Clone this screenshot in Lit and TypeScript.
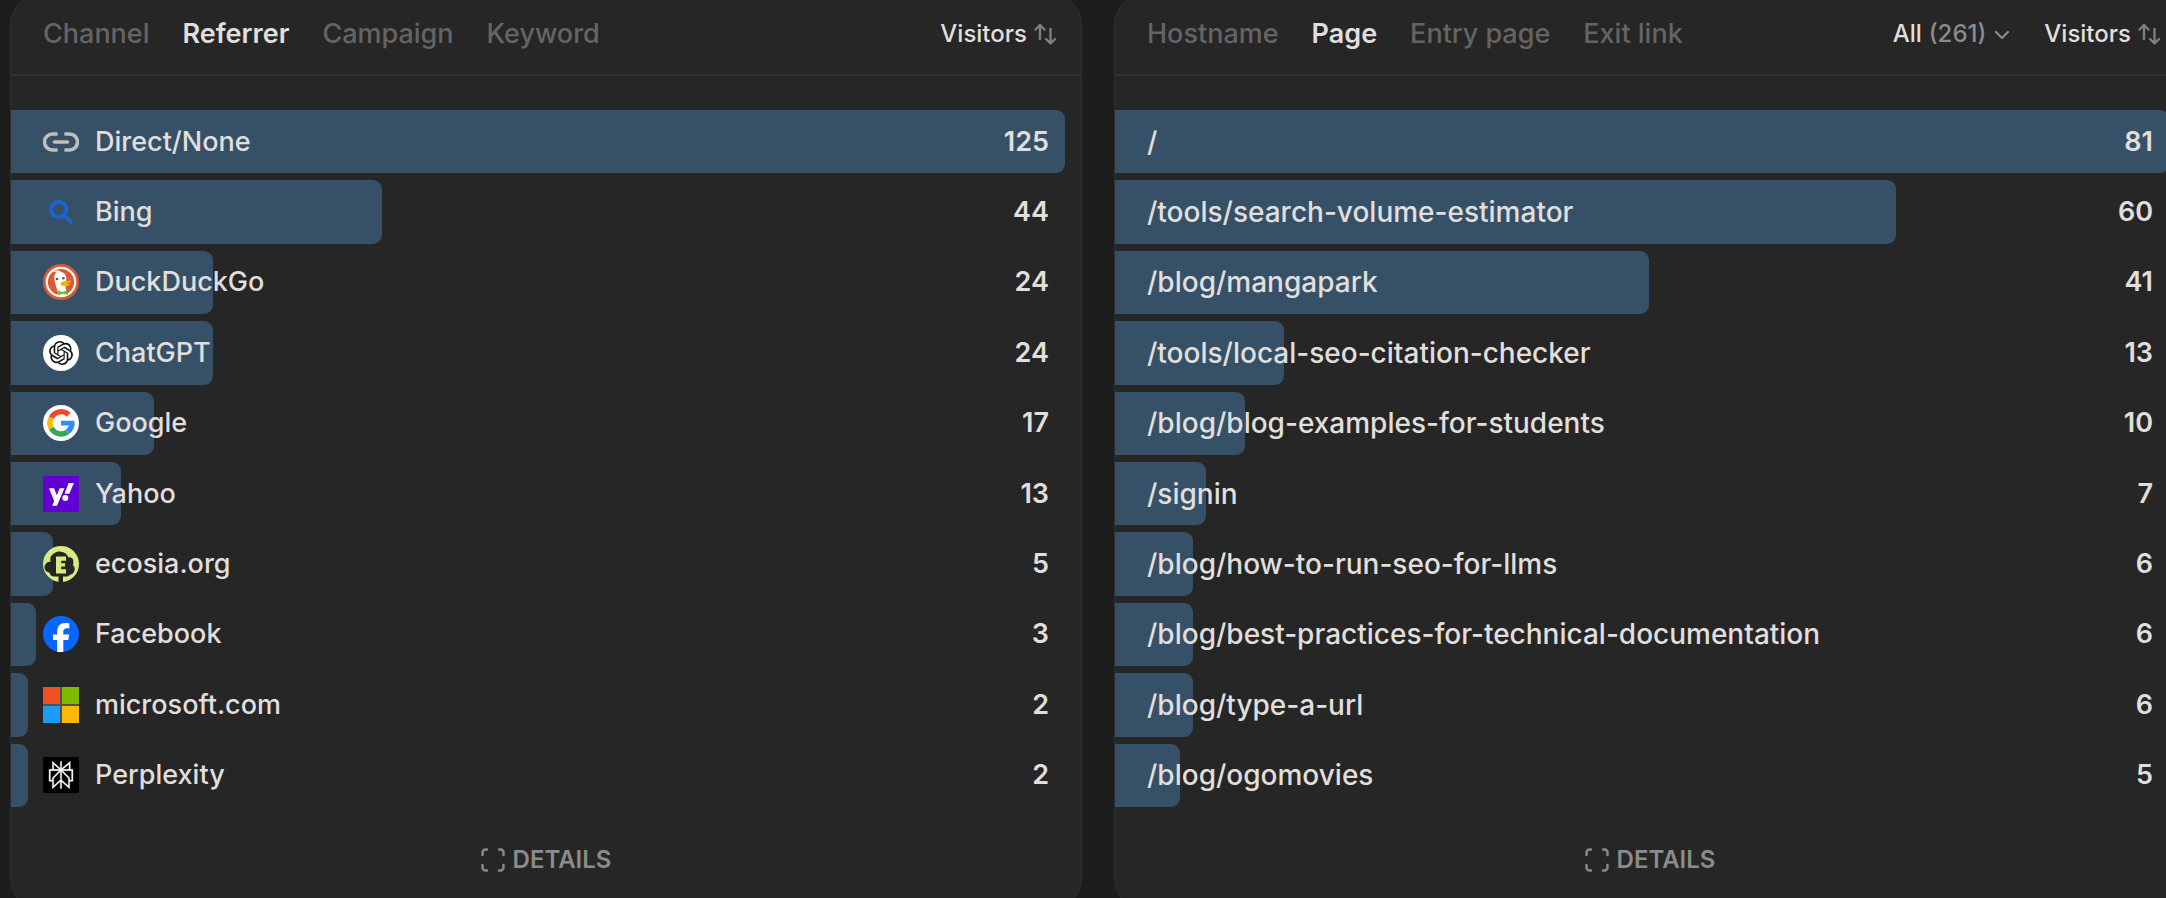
import { LitElement, html, css, svg, nothing, type TemplateResult } from "lit";
import { customElement, property, state } from "lit/decorators.js";
import { classMap } from "lit/directives/class-map.js";

interface Entry {
  label: string;
  value: number;
  icon?: string;
}

const icons: Record<string, TemplateResult> = {
  direct: svg`<g fill="none" stroke="#bfbfbd" stroke-width="3.6" stroke-linecap="butt">
    <path d="M14.6 10H9.5a8 8 0 0 0 0 16h5.1M21.4 10h5.1a8 8 0 0 1 0 16h-5.1"/>
    <path d="M11.5 18h13" stroke-linecap="round"/></g>`,
  bing: svg`<g fill="none" stroke="#1a66cc" stroke-width="3.8" stroke-linecap="round">
    <circle cx="15.7" cy="15.5" r="7.7"/><path d="M21.2 21.3l6.6 7"/></g>`,
  duckduckgo: svg`<circle cx="18" cy="18" r="18" fill="#de5833"/>
    <circle cx="18" cy="18" r="14.2" fill="none" stroke="#fff" stroke-width="2.2"/>
    <path d="M15.6 31c-1-5-3.1-9.3-3.8-13.3-.9-5-.5-7.8 2-9-1.2-.5-2-.8-2.9-.8 1-1.1 2.8-1.6 4.6-1.3 1 .1 2 .6 2.8 1.3 3.4.7 5 3.2 5 6.8 0 2-.7 4.3-.7 7.3 0 3.2.6 5.6 1.5 8.2-2.6 1.5-5.6 1.7-8.5.8z" fill="#fff"/>
    <circle cx="14" cy="15" r="1.3" fill="#44546b"/><circle cx="20.4" cy="14.2" r="1.2" fill="#44546b"/>
    <path d="M18 18.5c2.2-1.6 6.5-1.6 9.5-2 .9.3.7 1.2-.2 1.6-1.5.7-2.8 1-4.3 1.2 1.5.3 3 .4 4 .4.4 1-1.4 2.6-4.5 2.6-2.3 0-5-.7-5-2 0-.8.2-1.4.5-1.800z" fill="#fdb50a"/>
    <path d="M15 26.6l4.300 1.400 5.200-1.700.4 4.400-5-.9-4.300 1.500z" fill="#65bc46"/>`,
  chatgpt: svg`<circle cx="18" cy="18" r="18" fill="#fff"/>
    <path transform="translate(6 6)" fill="#111" d="M22.2819 9.8211a5.9847 5.9847 0 0 0-.5157-4.9108 6.0462 6.0462 0 0 0-6.5098-2.9A6.0651 6.0651 0 0 0 4.9807 4.1818a5.9847 5.9847 0 0 0-3.9977 2.9 6.0462 6.0462 0 0 0 .7427 7.0966 5.98 5.98 0 0 0 .511 4.9107 6.051 6.051 0 0 0 6.5146 2.9001A5.9847 5.9847 0 0 0 13.2599 24a6.0557 6.0557 0 0 0 5.7718-4.2058 5.9894 5.9894 0 0 0 3.9977-2.9001 6.0557 6.0557 0 0 0-.7475-7.073zm-9.022 12.6081a4.4755 4.4755 0 0 1-2.8764-1.0408l.1419-.0804 4.7783-2.7582a.7948.7948 0 0 0 .3927-.6813v-6.7369l2.02 1.1686a.071.071 0 0 1 .038.052v5.5826a4.504 4.504 0 0 1-4.4945 4.4944zm-9.6607-4.1254a4.4708 4.4708 0 0 1-.5346-3.0137l.142.0852 4.783 2.7582a.7712.7712 0 0 0 .7806 0l5.8428-3.3685v2.3324a.0804.0804 0 0 1-.0332.0615L9.74 19.9502a4.4992 4.4992 0 0 1-6.1408-1.6464zM2.3408 7.8956a4.485 4.485 0 0 1 2.3655-1.9728V11.6a.7664.7664 0 0 0 .3879.6765l5.8144 3.3543-2.0201 1.1685a.0757.0757 0 0 1-.071 0l-4.8303-2.7865A4.504 4.504 0 0 1 2.3408 7.872zm16.5963 3.8558L13.1038 8.364 15.1192 7.2a.0757.0757 0 0 1 .071 0l4.8303 2.7913a4.4944 4.4944 0 0 1-.6765 8.1042v-5.6772a.79.79 0 0 0-.407-.667zm2.0107-3.0231l-.142-.0852-4.7735-2.7818a.7759.7759 0 0 0-.7854 0L9.409 9.2297V6.8974a.0662.0662 0 0 1 .0284-.0615l4.8303-2.7866a4.4992 4.4992 0 0 1 6.6802 4.66zM8.3065 12.863l-2.02-1.1638a.0804.0804 0 0 1-.038-.0567V6.0742a4.4992 4.4992 0 0 1 7.3757-3.4537l-.142.0805L8.704 5.459a.7948.7948 0 0 0-.3927.6813zm1.0976-2.3654l2.602-1.4998 2.6069 1.4998v2.9994l-2.5974 1.4997-2.6067-1.4997Z"/>`,
  google: svg`<circle cx="18" cy="18" r="18" fill="#fff"/>
    <g fill="none" stroke-width="5.4">
    <path d="M25.7 9.700A11 11 0 0 0 8.300 12.700" stroke="#f0492b"/>
    <path d="M8.300 12.700a11 11 0 0 0 0 10.600" stroke="#fbbc05"/>
    <path d="M8.300 23.300a11 11 0 0 0 16.200 3.500" stroke="#34a853"/>
    <path d="M24.500 26.800A11 11 0 0 0 29 18.400" stroke="#2f8df6"/></g>
    <path d="M18 15.800h13.300c.2 1.600.1 3.300-.2 4.700H18z" fill="#2f8df6"/>`,
  yahoo: svg`<path d="M0 0h36v36H0z" fill="#6001d2"/>
    <path d="M6 12.300h5l2.800 7 2.800-7h4.800L14 29.700H9.200l2-4.700z" fill="#fff"/>
    <circle cx="22.300" cy="22" r="3" fill="#fff"/>
    <path d="M25.600 7h5.300l-4.600 10.800h-4.700z" fill="#fff"/>`,
  ecosia: svg`<circle cx="18" cy="18" r="18" fill="#d7eb80"/>
    <path d="M15.500 36v-5.500H11a5 5 0 0 1-4.500-3.700A5.500 5.500 0 0 1 7.500 15.800a8 8 0 0 1 4-8.800 9.500 9.500 0 0 1 14 4.500 3.800 3.800 0 0 1 4.800 4.300 3.600 3.600 0 0 1-.5 3.200 5.600 5.600 0 0 1-2.800 9.700 5 5 0 0 1-3 1.800H20V36z" fill="#262626"/>
    <path d="M13 10.500h10v4.300h-4.800v2.400H22v3.400h-3.800v2.600H23v4.300H13z" fill="#d7eb80"/>`,
  facebook: svg`<circle cx="18" cy="18" r="18" fill="#0866ff"/>
    <path d="M14.200 36V24H10v-5.600h4.200v-2.700c0-6 2.700-8.800 8.400-8.800 1.300 0 2.900.2 3.700.4v5c-.5-.1-1.300-.1-2-.1-3 0-4 1.100-4 3.900v2.300h5.900L25.200 24h-4.900v11.900a18 18 0 0 1-6.100.1z" fill="#fff"/>`,
  microsoft: svg`<path d="M0 0h17v17H0z" fill="#f25022"/><path d="M19 0h17v17H19z" fill="#7fba00"/>
    <path d="M0 19h17v17H0z" fill="#1b9df5"/><path d="M19 19h17v17H19z" fill="#ffb90a"/>
    <path d="M17 0h2v36h-2zM0 17h36v2H0z" fill="#505050"/>`,
  perplexity: svg`<rect width="36" height="36" rx="1.5" fill="#000"/>
    <path transform="translate(4.2 4.2) scale(1.15)" fill="#fff" stroke="#fff" stroke-width=".3" d="M22.3977 7.0896h-2.3106V.0676l-7.5094 6.3542V.1577h-1.1554v6.1966L4.4904 0v7.0896H1.6023v10.3976h2.8882V24l6.932-6.3591v6.2005h1.1554v-6.0469l6.9318 6.1807v-6.4879h2.8882V7.0896zm-3.4657-4.531v4.531h-5.355l5.355-4.531zm-13.2862.0676 4.8691 4.4634H5.6458V2.6262zM2.7576 16.332V8.245h7.8476l-6.1149 6.1147v1.9723H2.7576zm2.8882 5.0404v-3.8852h.0001v-2.6488l5.7763-5.7764v7.0111l-5.7764 5.2993zm12.7086.0248-5.7766-5.1509V9.0618l5.7766 5.7766v6.5588zm2.8882-5.0652h-1.733v-1.9723L13.3948 8.245h7.8478v8.087z"/>`,
};

const referrers: Entry[] = [
  { label: "Direct/None", value: 125, icon: "direct" },
  { label: "Bing", value: 44, icon: "bing" },
  { label: "DuckDuckGo", value: 24, icon: "duckduckgo" },
  { label: "ChatGPT", value: 24, icon: "chatgpt" },
  { label: "Google", value: 17, icon: "google" },
  { label: "Yahoo", value: 13, icon: "yahoo" },
  { label: "ecosia.org", value: 5, icon: "ecosia" },
  { label: "Facebook", value: 3, icon: "facebook" },
  { label: "microsoft.com", value: 2, icon: "microsoft" },
  { label: "Perplexity", value: 2, icon: "perplexity" },
];

const pages: Entry[] = [
  { label: "/", value: 81 },
  { label: "/tools/search-volume-estimator", value: 60 },
  { label: "/blog/mangapark", value: 41 },
  { label: "/tools/local-seo-citation-checker", value: 13 },
  { label: "/blog/blog-examples-for-students", value: 10 },
  { label: "/signin", value: 7 },
  { label: "/blog/how-to-run-seo-for-llms", value: 6 },
  { label: "/blog/best-practices-for-technical-documentation", value: 6 },
  { label: "/blog/type-a-url", value: 6 },
  { label: "/blog/ogomovies", value: 5 },
];

@customElement("stat-card")
export class StatCard extends LitElement {
  @property({ attribute: false }) tabs: string[] = [];
  @property({ attribute: false }) entries: Entry[] = [];
  @property({ type: Number }) total = 0;
  @state() private picked = 1;

  static styles = css`
    :host {
      display: flex;
      flex-direction: column;
      min-width: 0;
      box-sizing: border-box;
      overflow: hidden;
      background: #262626;
      border: 1px solid #303030;
      border-radius: 32px;
    }
    button {
      display: flex;
      align-items: center;
      margin: 0;
      padding: 0;
      border: 0;
      background: none;
      color: inherit;
      font: inherit;
      cursor: pointer;
    }
    svg {
      display: block;
      flex: none;
    }
    .head {
      display: flex;
      align-items: center;
      justify-content: space-between;
      height: 80px;
      padding: 0 25px 0 32px;
      border-bottom: 2px solid #303030;
    }
    .tabs {
      display: flex;
      gap: 33px;
      font-size: 27px;
      line-height: 36px;
      color: #646464;
    }
    .tabs .active {
      color: #e0dfdd;
      font-weight: 600;
    }
    .tools {
      display: flex;
      gap: 33px;
      font-size: 24px;
      line-height: 32px;
      color: #e0dfdd;
    }
    .tools button {
      gap: 7px;
    }
    .soft {
      color: #8a8c8a;
    }
    .list {
      display: grid;
      grid-auto-rows: 1fr;
      gap: 7px;
      height: 697px;
      margin: 34px 16px 0 0;
      padding: 0;
      list-style: none;
    }
    .row {
      display: grid;
      grid-template-columns: minmax(0, 1fr);
    }
    .bar,
    .line {
      grid-area: 1 / 1;
    }
    .bar {
      background: #365167;
      border-radius: 0 9px 9px 0;
    }
    .line {
      display: flex;
      align-items: center;
      gap: 16px;
      padding: 0 16px 0 32px;
      color: #e0dfdd;
      font-size: 27px;
      line-height: 36px;
      text-decoration: none;
    }
    .path {
      font-size: 28px;
    }
    .name {
      flex: 1;
      white-space: nowrap;
    }
    .value {
      font-size: 27px;
      font-weight: 600;
    }
    .foot {
      display: flex;
      justify-content: center;
      padding: 37px 0 33px;
    }
    .details {
      gap: 8px;
      color: #8a8c8a;
      font-size: 24px;
      font-weight: 600;
      line-height: 32px;
    }
  `;

  render() {
    const max = Math.max(...this.entries.map((e) => e.value));
    return html`
      <header class="head">
        <nav class="tabs">
          ${this.tabs.map(
            (tab, i) => html`<button
              class=${classMap({ active: i === this.picked })}
              aria-pressed=${i === this.picked}
              @click=${() => (this.picked = i)}
            >${tab}</button>`
          )}
        </nav>
        <div class="tools">
          ${this.total
            ? html`<button aria-haspopup="listbox">
                <span>All</span><span class="soft">(${this.total})</span>
                <svg width="18" height="20" fill="none" stroke="#8a8c8a" stroke-width="2.2" stroke-linecap="round" stroke-linejoin="round"><path d="M3 8l6 6 6-6"/></svg>
              </button>`
            : nothing}
          <button>
            Visitors
            <svg width="22" height="22" fill="none" stroke="#7c7e80" stroke-width="2.4" stroke-linecap="round" stroke-linejoin="round"><path d="M6 16V2M1.5 6.5L6 2l4.5 4.5M16.5 6v14M12 16l4.5 4.5L21 16"/></svg>
          </button>
        </div>
      </header>
      <ul class="list">
        ${this.entries.map(
          (e) => html`<li class="row">
            <div class="bar" style="width:${(e.value / max) * 100}%"></div>
            <a class=${classMap({ line: true, path: !e.icon })} href="#">
              ${e.icon ? html`<svg width="36" height="36" viewBox="0 0 36 36" aria-hidden="true">${icons[e.icon]}</svg>` : nothing}
              <span class="name">${e.label}</span>
              <span class="value">${e.value}</span>
            </a>
          </li>`
        )}
      </ul>
      <footer class="foot">
        <button class="details">
          <svg width="24" height="24" fill="none" stroke="#8a8c8a" stroke-width="2.4" stroke-linecap="round"><path d="M1.5 7V4.5a3 3 0 0 1 3-3H6M18 1.5h1.5a3 3 0 0 1 3 3V7M22.5 17v2.5a3 3 0 0 1-3 3H18M6 22.5H4.5a3 3 0 0 1-3-3V17"/></svg>
          DETAILS
        </button>
      </footer>
    `;
  }
}

@customElement("app-root")
export class AppRoot extends LitElement {
  static styles = css`
    :host {
      display: block;
      height: 100vh;
      overflow: hidden;
      background: #1d1d1d;
      font-family: Inter, "Open Sans", sans-serif;
      font-weight: 500;
    }
    .board {
      display: grid;
      grid-template-columns: repeat(2, minmax(0, 1fr));
      gap: 32px;
      margin: -7px -20px 0 10px;
    }
  `;

  render() {
    return html`<main class="board">
      <stat-card .tabs=${["Channel", "Referrer", "Campaign", "Keyword"]} .entries=${referrers}></stat-card>
      <stat-card .tabs=${["Hostname", "Page", "Entry page", "Exit link"]} .entries=${pages} .total=${261}></stat-card>
    </main>`;
  }
}
